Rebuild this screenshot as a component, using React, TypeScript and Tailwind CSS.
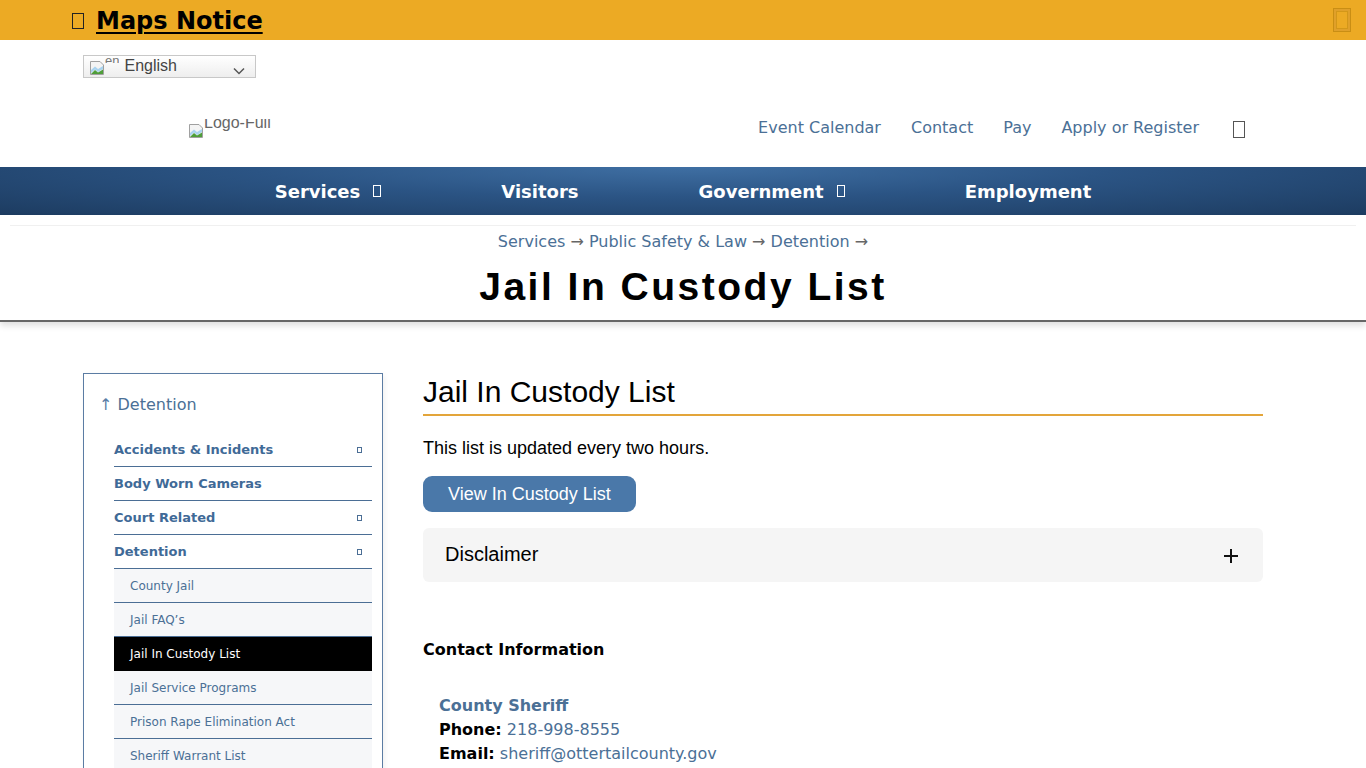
import React from "react";

const verdana = "font-['DejaVu_Sans',Verdana,sans-serif]";
const arial = "font-['Liberation_Sans',Arial,sans-serif]";

function BrokenImg() {
  return (
    <svg width="16" height="16" viewBox="0 0 16 16" className="shrink-0">
      <path d="M1.5 1.5h9.5l3.5 3.5v9.5h-13z" fill="#f4f4f4" stroke="#a0a0a0" />
      <path d="M2 10 L6 6.5 L9 9 L14 6 V9 L9 12 L6 9.5 L2 13Z" fill="#a9d3ef" />
      <path d="M2 14 L6 10 L9 12.5 L14 9.5 V14Z" fill="#4f9e3a" />
    </svg>
  );
}

const topItems = [
  { label: "Accidents & Incidents", more: true },
  { label: "Body Worn Cameras", more: false },
  { label: "Court Related", more: true },
  { label: "Detention", more: true },
];

const subItems = [
  "County Jail",
  "Jail FAQ’s",
  "Jail In Custody List",
  "Jail Service Programs",
  "Prison Rape Elimination Act",
  "Sheriff Warrant List",
];

export default function App() {
  return (
    <div className="min-h-[900px] bg-white text-black">
      {/* notice bar */}
      <div className="h-10 bg-[#ecaa24] flex items-center justify-between">
        <div className="ml-[72px] mt-[2px] flex items-center gap-[12px]">
          <span className="inline-block w-[12px] h-[16px] border-[1.5px] border-[#222]" />
          <a className={`${verdana} text-[24px] font-bold underline underline-offset-[3px] decoration-2 leading-none`}>
            Maps Notice
          </a>
        </div>
        <span className="mr-[15px] inline-block w-[18px] h-[24px] border border-[#c98e14] shadow-[inset_0_0_0_2px_#e0a02a,inset_0_0_0_3px_#d39719]" />
      </div>

      {/* language select */}
      <div className="w-[1200px] mx-auto">
        <div className="mt-[15px] w-[173px] h-[23px] border border-[#c8c8c8] bg-[linear-gradient(#ffffff,#eeeeee)] flex items-center relative">
          <div className="ml-[5px] mt-[3px] flex items-start">
            <BrokenImg />
            <span className={`${arial} text-[13px] text-[#777] leading-none -mt-[6px] h-[9px] overflow-hidden`}>en</span>
          </div>
          <span className={`${arial} text-[16px] text-[#444] ml-[5px] -mt-[1px]`}>English</span>
          <svg width="12" height="8" viewBox="0 0 12 8" className="absolute left-[149px] top-[11px]">
            <path d="M1 1.5 L6 6.5 L11 1.5" fill="none" stroke="#555" strokeWidth="1.5" />
          </svg>
        </div>
      </div>

      {/* header */}
      <div className="h-[89px] pt-[10px] flex items-center">
        <div className="ml-[188px] flex items-start h-[24px] mt-[6px]">
          <div className="mt-[4px]"><BrokenImg /></div>
          <span className={`${arial} text-[16px] text-[#666] leading-none h-[12px] overflow-hidden`}>
            <span className="block -mt-[4px]">Logo-Full</span>
          </span>
        </div>
        <nav className={`${verdana} ml-auto mr-[121px] flex items-center gap-[30px] text-[16px] text-[#4b7096]`}>
          <a>Event Calendar</a>
          <a>Contact</a>
          <a>Pay</a>
          <a>Apply or Register</a>
          <span className="ml-[4px] mt-[4px] inline-block w-[12px] h-[17px] border border-[#555]" />
        </nav>
      </div>

      {/* main nav */}
      <div className="h-12 bg-[radial-gradient(ellipse_70%_140%_at_50%_0%,#3f6fa3_0%,#2b5484_45%,#1d3c61_100%)] flex items-center justify-center gap-[120px] text-white">
        {["Services", "Visitors", "Government", "Employment"].map((n) => (
          <div key={n} className={`${verdana} flex items-center gap-[13px] text-[18px] font-bold`}>
            <span>{n}</span>
            {(n === "Services" || n === "Government") && (
              <span className="inline-block w-[8px] h-[12px] border border-white" />
            )}
          </div>
        ))}
      </div>

      {/* page title */}
      <div className="pt-[10px] border-b-2 border-[#666] shadow-[0_4px_6px_rgba(0,0,0,0.12)]">
        <div className="mx-[10px] border-t border-[#f0f0f0]" />
        <div className={`${verdana} text-center text-[16px] text-[#4b7096] mt-[6px] leading-[20px]`}>
          Services <span className="text-[#666]">→</span> Public Safety &amp; Law <span className="text-[#666]">→</span> Detention <span className="text-[#666]">→</span>
        </div>
        <h1 className={`${arial} text-center font-bold text-[39px] tracking-[2.5px] leading-[46px] mt-[12px] pb-[10px]`}>
          Jail In Custody List
        </h1>
      </div>

      {/* body */}
      <div className="w-[1180px] ml-[83px] mt-[51px] flex gap-[40px] items-start">
        {/* sidebar */}
        <aside className="w-[300px] border border-[#5b7ca3] shadow-[2px_2px_6px_rgba(0,0,0,0.06)] pl-[15px] pr-[10px] pt-[20px] pb-[20px]">
          <div className={`${verdana} text-[16px] text-[#4b7096] leading-[22px]`}>
            <span className="text-[#5a7ea6]">↑</span> Detention
          </div>
          <ul className="ml-[15px] mt-[17px]">
            {topItems.map((it) => (
              <li key={it.label} className={`${verdana} h-[34px] border-b border-[#4b6e95] flex items-center justify-between text-[13px] font-bold text-[#3f6a97]`}>
                <span>{it.label}</span>
                {it.more && <span className="mr-[10px] inline-block w-[5px] h-[6px] border border-[#4b6e95]" />}
              </li>
            ))}
            {subItems.map((s) => {
              const active = s === "Jail In Custody List";
              return (
                <li
                  key={s}
                  className={`${verdana} h-[34px] flex items-center text-[12px] pl-[16px] ${
                    active ? "bg-black text-white" : "bg-[#f6f7f9] text-[#4b7096] border-b border-[#4b6e95]"
                  }`}
                >
                  {s}
                </li>
              );
            })}
          </ul>
        </aside>

        {/* main */}
        <main className="w-[840px]">
          <h2 className={`${arial} text-[30px] leading-[36px] pt-[1px] pb-[4px] border-b-2 border-[#e3a53a]`}>
            Jail In Custody List
          </h2>
          <p className={`${arial} text-[18px] mt-[21px] leading-[22px]`}>This list is updated every two hours.</p>
          <button className={`${arial} mt-[17px] h-[36px] px-[25px] rounded-[9px] bg-[#4a78a9] text-white text-[18px]`}>
            View In Custody List
          </button>
          <div className="mt-[16px] h-[54px] rounded-[6px] bg-[#f5f5f5] flex items-center justify-between pl-[22px] pr-[24px]">
            <span className={`${arial} text-[20px] -mt-[3px]`}>Disclaimer</span>
            <svg width="16" height="16" viewBox="0 0 16 16" className="mt-[2px]">
              <path d="M8 1v14M1 8h14" stroke="#111" strokeWidth="2" />
            </svg>
          </div>
          <div className={`${verdana} text-[16px] font-bold mt-[57px] leading-[22px]`}>Contact Information</div>
          <div className={`${verdana} text-[16px] ml-[16px] mt-[33px] leading-[24px]`}>
            <div className="font-bold text-[#4b7096]">County Sheriff</div>
            <div>
              <b>Phone:</b> <span className="text-[#4b7096]">218-998-8555</span>
            </div>
            <div>
              <b>Email:</b> <span className="text-[#4b7096]">sheriff@ottertailcounty.gov</span>
            </div>
          </div>
        </main>
      </div>
    </div>
  );
}
